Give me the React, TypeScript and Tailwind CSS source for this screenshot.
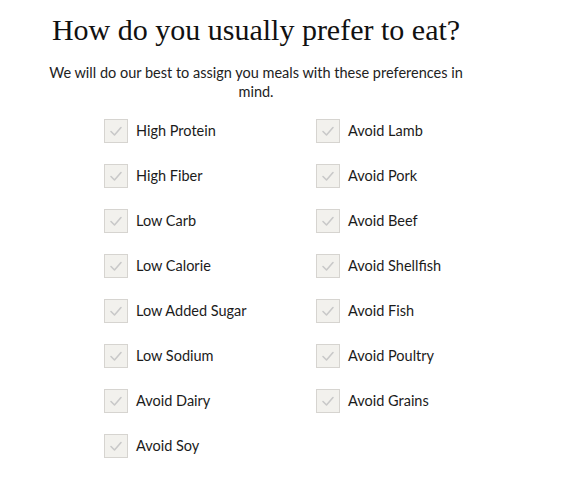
const left = ["High Protein", "High Fiber", "Low Carb", "Low Calorie", "Low Added Sugar", "Low Sodium", "Avoid Dairy", "Avoid Soy"];
const right = ["Avoid Lamb", "Avoid Pork", "Avoid Beef", "Avoid Shellfish", "Avoid Fish", "Avoid Poultry", "Avoid Grains"];

function Check({ label }: { label: string }) {
  return (
    <label className="flex items-center h-[45px] gap-[8px] cursor-pointer">
      <span className="w-[24px] h-[24px] border border-[#d6d4d0] bg-[#f2f1ed] flex items-center justify-center">
        <svg width="14" height="14" viewBox="0 0 14 14" fill="none">
          <path d="M2 7.5 L5.5 11 L12 3.5" stroke="#c9c9c9" strokeWidth="1.6" strokeLinecap="round" strokeLinejoin="round" />
        </svg>
      </span>
      <span className="text-[14.5px] text-[#1b1b1b] font-['Lato',sans-serif]">{label}</span>
    </label>
  );
}

export default function App() {
  return (
    <div className="w-[565px] h-[500px] bg-white">
      <div className="w-[512px] pt-[10px] text-center">
        <h1 className="font-['Liberation_Serif',serif] text-[30px] leading-[40px] text-[#111]">
          How do you usually prefer to eat?
        </h1>
        <p className="mt-[13px] mx-auto w-[440px] font-['Lato',sans-serif] text-[14.5px] leading-[19px] text-[#222]">
          We will do our best to assign you meals with these preferences in mind.
        </p>
      </div>
      <div className="flex pl-[104px] mt-[7px]">
        <div className="w-[212px] flex flex-col">
          {left.map((l) => (
            <Check key={l} label={l} />
          ))}
        </div>
        <div className="flex flex-col">
          {right.map((l) => (
            <Check key={l} label={l} />
          ))}
        </div>
      </div>
    </div>
  );
}
